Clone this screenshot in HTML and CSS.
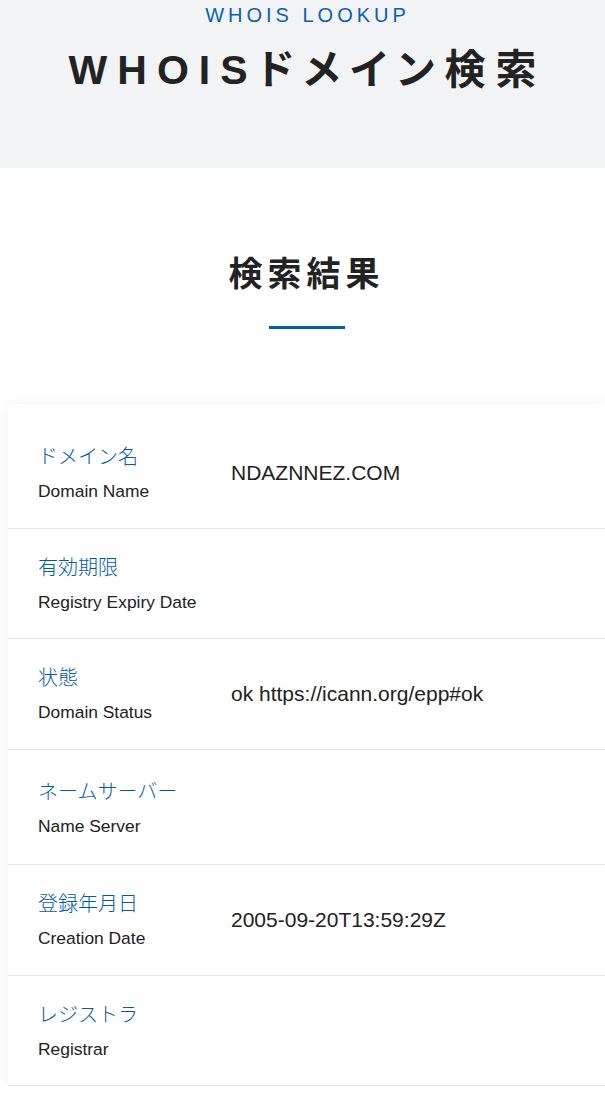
FILE: index.html
```html
<!DOCTYPE html>
<html lang="ja">
<head>
    <meta charset="utf-8">
    <title>WHOISドメイン検索</title>
    <link rel="stylesheet" href="styles.css">
</head>
<body>
    <!-- page heading -->
    <header class="head">
        <p class="head-sub">WHOIS LOOKUP</p>
        <h1 class="head-title">WHOISドメイン検索</h1>
    </header>

    <!-- lookup result -->
    <main class="result">
        <h2 class="result-title">検索結果</h2>
        <div class="result-bar"></div>

        <div class="card">
            <div class="row">
                <div class="label">
                    <span class="label-ja">ドメイン名</span>
                    <span class="label-en">Domain Name</span>
                </div>
                <div class="value">NDAZNNEZ.COM</div>
            </div>
            <div class="row">
                <div class="label">
                    <span class="label-ja">有効期限</span>
                    <span class="label-en">Registry Expiry Date</span>
                </div>
                <div class="value"></div>
            </div>
            <div class="row">
                <div class="label">
                    <span class="label-ja">状態</span>
                    <span class="label-en">Domain Status</span>
                </div>
                <div class="value">ok https://icann.org/epp#ok</div>
            </div>
            <div class="row row-tall">
                <div class="label">
                    <span class="label-ja">ネームサーバー</span>
                    <span class="label-en">Name Server</span>
                </div>
                <div class="value"></div>
            </div>
            <div class="row">
                <div class="label">
                    <span class="label-ja">登録年月日</span>
                    <span class="label-en">Creation Date</span>
                </div>
                <div class="value">2005-09-20T13:59:29Z</div>
            </div>
            <div class="row">
                <div class="label">
                    <span class="label-ja">レジストラ</span>
                    <span class="label-en">Registrar</span>
                </div>
                <div class="value"></div>
            </div>
        </div>
    </main>
</body>
</html>
```

FILE: styles.css
```css
/* base */
body {
    margin: 0;
    padding: 0;
    background: #fff;
    color: #222;
    font-family: "Liberation Sans", "Noto Sans CJK JP", sans-serif;
}

/* gray heading band */
.head {
    background: #f2f3f5;
    text-align: center;
    padding: 0 0 68px;
}

.head-sub {
    margin: 0;
    padding-left: 10px;
    font-size: 20px;
    line-height: 30px;
    letter-spacing: 4px;
    color: #0b5fb0;
}

.head-title {
    margin: 10px 0 0;
    padding-left: 10px;
    font-size: 41px;
    line-height: 60px;
    font-weight: 700;
    letter-spacing: 10px;
    font-feature-settings: "palt";
    color: #222;
}

/* result section */
.result {
    margin-left: 8px;
    padding-top: 78px;
}

.result-title {
    margin: 0;
    text-align: center;
    font-family: "Noto Sans CJK JP", sans-serif;
    font-size: 34px;
    line-height: 51px;
    font-weight: 700;
    letter-spacing: 5px;
    color: #222;
}

.result-bar {
    width: 76px;
    height: 3px;
    margin: 29px auto 0;
    background: #005bac;
}

/* the table card */
.card {
    margin-top: 75px;
    padding-top: 14px;
    background: #fff;
    box-shadow: 0 0 15px rgba(0,0,0,0.06);
}

.row {
    display: flex;
    align-items: center;
    padding: 23px 0 23.5px 30px;
    border-bottom: 1px solid #e5e5e5;
}

.row-tall {
    padding-top: 26px;
    padding-bottom: 25.5px;
}

.label {
    width: 193px;
    flex-shrink: 0;
}

.label-ja {
    display: block;
    font-family: "Noto Sans CJK JP", sans-serif;
    font-weight: 300;
    font-size: 20px;
    line-height: 30px;
    color: #005aab;
}

.label-en {
    display: block;
    margin-top: 7px;
    font-size: 17.4px;
    line-height: 26px;
    color: #222;
}

.value {
    font-size: 21px;
    line-height: 30px;
    color: #222;
}
```
